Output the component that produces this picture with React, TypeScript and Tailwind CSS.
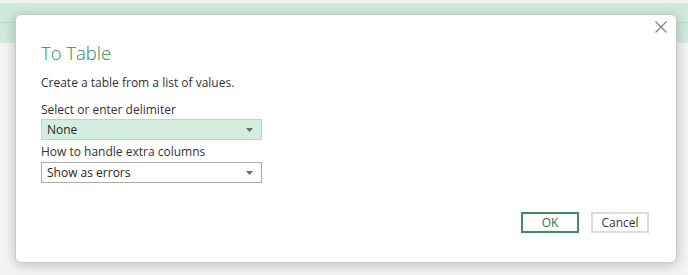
import React from "react";

function Caret() {
  return (
    <svg width="7" height="4" viewBox="0 0 7 4" className="shrink-0">
      <path d="M0 0 H7 L3.5 4 Z" fill="#6b6b6b" />
    </svg>
  );
}

function Select({ value, active }: { value: string; active?: boolean }) {
  return (
    <div
      className={
        active
          ? "flex h-[21px] w-[221px] items-center justify-between border border-[#b3dcc6] bg-[#d3eedf] pl-[5px] pr-[8px] text-[12px] text-[#262626]"
          : "flex h-[21px] w-[221px] items-center justify-between border border-[#ababab] bg-white pl-[5px] pr-[8px] text-[12px] text-[#262626]"
      }
    >
      <span>{value}</span>
      <Caret />
    </div>
  );
}

export default function App() {
  return (
    <div
      className="relative h-[275px] w-[688px] overflow-hidden bg-[#f3f3f3]"
      style={{ fontFamily: '"Segoe UI", "Open Sans", "Noto Sans", sans-serif' }}
    >
      {/* page behind the dialog */}
      <div className="h-[3px] bg-[#eef2f0]" />
      <div className="h-[19px] bg-[#cfe9dc]" />
      <div className="h-px bg-[#b9d9c9]" />
      <div className="h-[19px] bg-[#cfe9dc]" />
      <div className="h-px bg-[#e3e3e3]" />

      {/* dialog */}
      <div className="absolute left-[15px] top-[14px] flex h-[249px] w-[662px] flex-col rounded-[6px] border border-[#c9c9c9] bg-white pl-[25px] shadow-[0_2px_12px_rgba(0,0,0,0.22)]">
        <button className="absolute right-[8px] top-[5px] flex h-[14px] w-[14px] items-center justify-center">
          <svg width="12" height="12" viewBox="0 0 12 12">
            <path d="M0.5 0.5 L11.5 11.5 M11.5 0.5 L0.5 11.5" stroke="#7a7a7a" strokeWidth="1.1" />
          </svg>
        </button>

        <h1 className="mt-[25px] text-[18.5px] font-light leading-[26px] text-[#2e8a60]">To Table</h1>
        <p className="mt-[9px] text-[12px] leading-[16px] text-[#333333]">
          Create a table from a list of values.
        </p>

        <label className="mt-[11px] text-[12px] leading-[16px] text-[#333333]">
          Select or enter delimiter
        </label>
        <div className="mt-[1px]">
          <Select value="None" active />
        </div>

        <label className="mt-[4px] text-[12px] leading-[16px] text-[#333333]">
          How to handle extra columns
        </label>
        <div className="mt-[2px]">
          <Select value="Show as errors" />
        </div>

        <div className="mt-[29px] flex justify-end gap-[12px] pr-[27px]">
          <button className="h-[21px] w-[58px] border-2 border-[#3f8d65] text-[12px] leading-none text-[#2f6f4f]">
            OK
          </button>
          <button className="h-[21px] w-[58px] border-2 border-[#dcdcdc] text-[12px] leading-none text-[#333333]">
            Cancel
          </button>
        </div>
      </div>
    </div>
  );
}
